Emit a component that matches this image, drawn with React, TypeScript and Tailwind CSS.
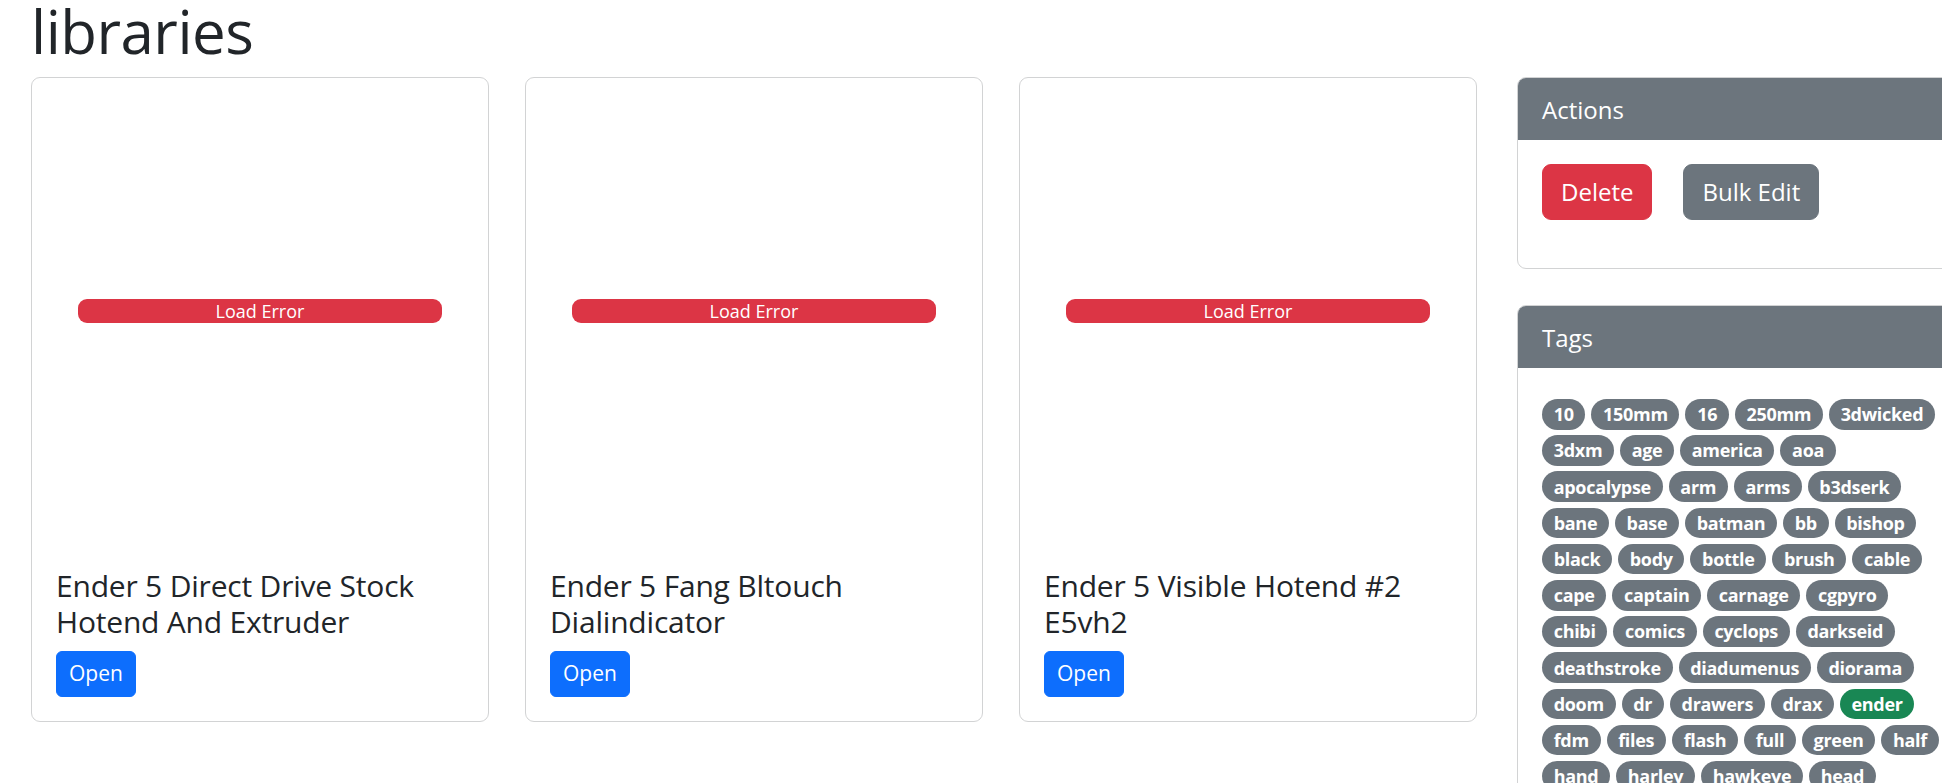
const models = [
  { id: 1, title: 'Ender 5 Direct Drive Stock Hotend And Extruder' },
  { id: 2, title: 'Ender 5 Fang Bltouch Dialindicator' },
  { id: 3, title: 'Ender 5 Visible Hotend #2 E5vh2' },
];

// rows as they wrap in the sidebar
const tagRows = [
  ['10', '150mm', '16', '250mm', '3dwicked'],
  ['3dxm', 'age', 'america', 'aoa'],
  ['apocalypse', 'arm', 'arms', 'b3dserk'],
  ['bane', 'base', 'batman', 'bb', 'bishop'],
  ['black', 'body', 'bottle', 'brush', 'cable'],
  ['cape', 'captain', 'carnage', 'cgpyro'],
  ['chibi', 'comics', 'cyclops', 'darkseid'],
  ['deathstroke', 'diadumenus', 'diorama'],
  ['doom', 'dr', 'drawers', 'drax', 'ender'],
  ['fdm', 'files', 'flash', 'full', 'green', 'half'],
  ['hand', 'harley', 'hawkeye', 'head'],
];

const activeTag = 'ender';

const ModelCard = ({ title }: { title: string }) => {
  return (
    <div className="w-[458px] shrink-0 border border-[#d2d3d4] rounded-[9px] bg-white flex flex-col">
      <div className="h-[466px] flex items-center px-[46px]">
        <div className="w-full h-6 rounded-[9px] bg-[#dc3545] text-white text-[18px] leading-6 text-center">
          Load Error
        </div>
      </div>
      <div className="p-6">
        <h5 className="text-[30px] leading-[36px] font-medium tracking-[-0.2px] mb-[11px]">{title}</h5>
        <button className="bg-[#0d6efd] text-white text-[21px] leading-[31.5px] px-3 py-[6px] rounded-[6px] border border-[#0d6efd]">
          Open
        </button>
      </div>
    </div>
  );
};

const SideCard = ({ title, children }: { title: string; children: React.ReactNode }) => {
  return (
    <div className="border border-[#d2d3d4] rounded-[9px] overflow-hidden bg-white">
      <div className="bg-[#6c757d] text-white text-[24px] leading-[36px] px-6 pt-[14px] pb-[12px]">{title}</div>
      {children}
    </div>
  );
};

export default function App() {
  return (
    <div className="w-[1942px] h-[783px] overflow-hidden bg-white text-[#212529] font-['Open_Sans','Noto_Sans',sans-serif]">
      <div className="pl-[31px]">
        <h1 className="text-[60px] leading-[62px] font-medium tracking-[-0.5px] mb-[15px]">libraries</h1>

        <div className="flex items-start gap-[40px]">
          <div className="flex items-start gap-[36px]">
            {models.map((m) => (
              <ModelCard key={m.id} title={m.title} />
            ))}
          </div>

          <div className="w-[460px] shrink-0 flex flex-col gap-[36px]">
            <SideCard title="Actions">
              <div className="px-6 pt-6 pb-12 flex gap-[31px]">
                <button className="bg-[#dc3545] text-white text-[24px] leading-[36px] px-[18px] py-[9px] rounded-[9px] border border-[#dc3545]">
                  Delete
                </button>
                <button className="bg-[#6c757d] text-white text-[24px] leading-[36px] px-[18px] py-[9px] rounded-[9px] border border-[#6c757d]">
                  Bulk Edit
                </button>
              </div>
            </SideCard>

            <SideCard title="Tags">
              <div className="px-6 pt-[31px] pb-6 flex flex-col gap-[5.6px]">
                {tagRows.map((row, i) => (
                  <div key={i} className="flex gap-[6px]">
                    {row.map((tag) => (
                      <span
                        key={tag}
                        className={`text-white text-[18px] leading-[18px] font-bold tracking-[-0.3px] px-[11.7px] py-[6.3px] rounded-full ${
                          tag === activeTag ? 'bg-[#198754]' : 'bg-[#6c757d]'
                        }`}
                      >
                        {tag}
                      </span>
                    ))}
                  </div>
                ))}
              </div>
            </SideCard>
          </div>
        </div>
      </div>
    </div>
  );
}
